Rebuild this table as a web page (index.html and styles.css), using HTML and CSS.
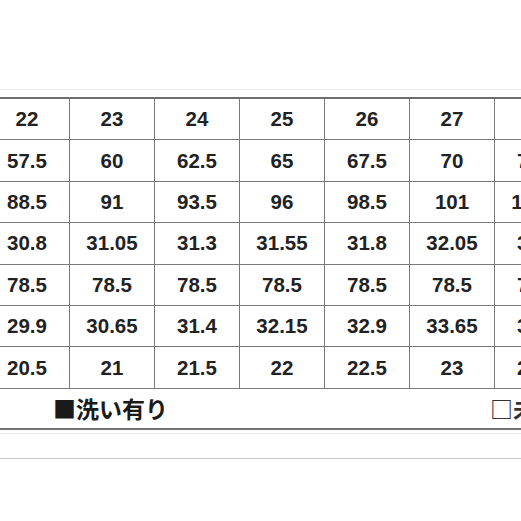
FILE: index.html
```
<!DOCTYPE html>
<html lang="ja">
<head>
<meta charset="utf-8">
<link rel="stylesheet" href="styles.css">
</head>
<body>
<div class="sheet">
  <div class="faint-top"></div>
  <div class="grid">
    <div class="cell">22</div><div class="cell">23</div><div class="cell">24</div><div class="cell">25</div><div class="cell">26</div><div class="cell">27</div><div class="cell">28</div>
    <div class="cell">57.5</div><div class="cell">60</div><div class="cell">62.5</div><div class="cell">65</div><div class="cell">67.5</div><div class="cell">70</div><div class="cell">72.5</div>
    <div class="cell">88.5</div><div class="cell">91</div><div class="cell">93.5</div><div class="cell">96</div><div class="cell">98.5</div><div class="cell">101</div><div class="cell">103.5</div>
    <div class="cell">30.8</div><div class="cell">31.05</div><div class="cell">31.3</div><div class="cell">31.55</div><div class="cell">31.8</div><div class="cell">32.05</div><div class="cell">32.3</div>
    <div class="cell">78.5</div><div class="cell">78.5</div><div class="cell">78.5</div><div class="cell">78.5</div><div class="cell">78.5</div><div class="cell">78.5</div><div class="cell">78.5</div>
    <div class="cell">29.9</div><div class="cell">30.65</div><div class="cell">31.4</div><div class="cell">32.15</div><div class="cell">32.9</div><div class="cell">33.65</div><div class="cell">34.4</div>
    <div class="cell">20.5</div><div class="cell">21</div><div class="cell">21.5</div><div class="cell">22</div><div class="cell">22.5</div><div class="cell">23</div><div class="cell">23.5</div>
  </div>
  <div class="legend">
    <span class="legend-item washed">■洗い有り</span>
    <span class="legend-item unwashed">□未洗い</span>
  </div>
  <div class="faint-bottom"></div>
  <div class="gray-bottom"></div>
</div>
</body>
</html>
```
FILE: styles.css
```
html, body {
  margin: 0;
  padding: 0;
  background: #ffffff;
  overflow: hidden;
  width: 521px;
  height: 521px;
}

.sheet {
  width: 620px;
  margin-left: -15px;
  padding-top: 89px;
  font-family: "Liberation Sans", "Noto Sans CJK JP", sans-serif;
  color: #222222;
}

.faint-top {
  height: 1px;
  background: #ececec;
  margin-bottom: 7px;
}

.grid {
  display: grid;
  grid-template-columns: repeat(7, 85px);
  border-top: 2px solid #6e6e6e;
}

.cell {
  box-sizing: border-box;
  height: 41.4px;
  border-right: 1px solid #7a7a7a;
  border-bottom: 1px solid #7a7a7a;
  display: flex;
  align-items: center;
  justify-content: center;
  font-size: 20.5px;
  font-weight: bold;
}

.legend {
  box-sizing: border-box;
  height: 41px;
  border-bottom: 2px solid #737373;
  display: flex;
  align-items: center;
  font-family: "Noto Sans CJK JP", sans-serif;
  font-size: 23px;
  font-weight: bold;
  color: #1a1a1a;
}

.washed {
  margin-left: 68px;
}

.unwashed {
  margin-left: auto;
  width: 115px;
  white-space: nowrap;
  color: #333333;
}

.faint-bottom {
  height: 1px;
  background: #ededed;
  margin-top: 3px;
}

.gray-bottom {
  height: 1px;
  background: #c8c8c8;
  margin-top: 24px;
}
```
